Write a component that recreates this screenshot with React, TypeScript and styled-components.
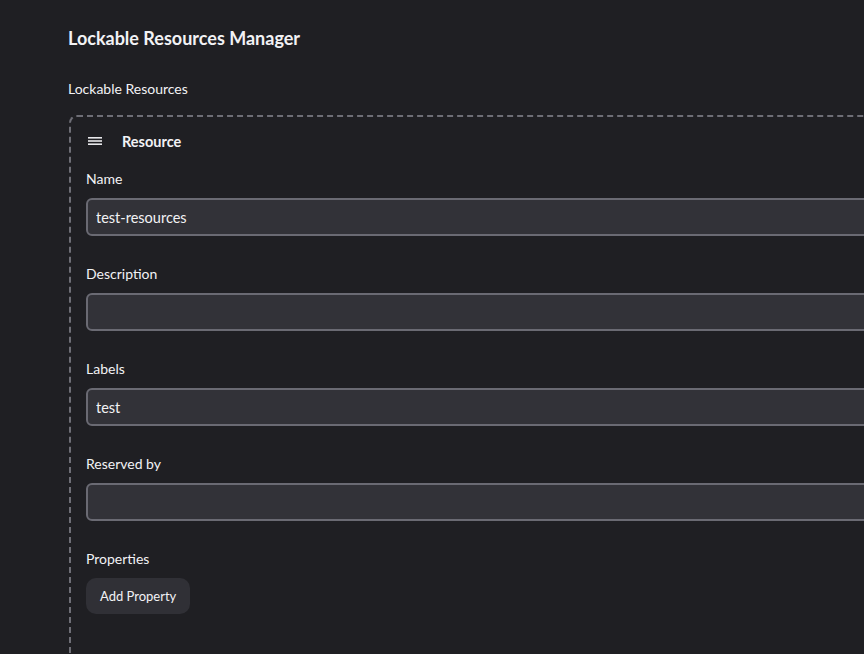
import React from "react";
import styled, { createGlobalStyle } from "styled-components";

const Global = createGlobalStyle`
  html, body { margin: 0; padding: 0; background: #1f1f23; overflow: hidden; }
  body { font-family: Lato, "Noto Sans", sans-serif; color: #f2f2f5; }
`;

const Page = styled.div`
  width: 1100px;
  padding: 26px 0 0 68px;
  box-sizing: border-box;
  height: 654px;
`;

const Title = styled.h1`
  margin: 0;
  font-size: 18px;
  font-weight: 700;
  line-height: 24px;
`;

const SectionLabel = styled.div`
  margin-top: 29px;
  font-size: 14px;
  line-height: 20px;
`;

const Repeatable = styled.div`
  margin-top: 16px;
  margin-left: 1px;
  border: 2px dashed #6e6e76;
  border-radius: 8px;
  padding: 14px 0 40px 15px;
  height: 700px;
  box-sizing: border-box;
`;

const Header = styled.div`
  display: flex;
  align-items: center;
  gap: 19px;
  height: 20px;
  margin-left: 1px;
`;

const HeaderTitle = styled.span`
  font-size: 14.5px;
  font-weight: 700;
`;

const Field = styled.div`
  display: flex;
  flex-direction: column;
  margin-top: 18px;
  & + & {
    margin-top: 28px;
  }
`;

const Label = styled.label`
  font-size: 14px;
  line-height: 20px;
  margin-bottom: 9px;
`;

const Input = styled.input`
  box-sizing: border-box;
  height: 38px;
  width: 900px;
  background: #323238;
  border: 2px solid #6a6a73;
  border-radius: 6px;
  color: #f2f2f5;
  font-family: inherit;
  font-size: 14.5px;
  padding: 0 8px;
  outline: none;
`;

const Button = styled.button`
  align-self: flex-start;
  height: 36px;
  padding: 0 14px;
  background: #303036;
  border: none;
  border-radius: 10px;
  color: #f2f2f5;
  font-family: inherit;
  font-size: 13px;
`;

const Menu = () => (
  <svg width="16" height="12" viewBox="0 0 16 12">
    <rect x="1" y="2" width="14" height="1.6" fill="#e8e8ec" />
    <rect x="1" y="5.2" width="14" height="1.6" fill="#e8e8ec" />
    <rect x="1" y="8.4" width="14" height="1.6" fill="#e8e8ec" />
  </svg>
);

const fields = [
  { label: "Name", value: "test-resources" },
  { label: "Description", value: "" },
  { label: "Labels", value: "test" },
  { label: "Reserved by", value: "" },
];

export default function App() {
  return (
    <>
      <Global />
      <Page>
        <Title>Lockable Resources Manager</Title>
        <SectionLabel>Lockable Resources</SectionLabel>
        <Repeatable>
          <Header>
            <Menu />
            <HeaderTitle>Resource</HeaderTitle>
          </Header>
          {fields.map((f) => (
            <Field key={f.label}>
              <Label>{f.label}</Label>
              <Input defaultValue={f.value} />
            </Field>
          ))}
          <Field>
            <Label>Properties</Label>
            <Button>Add Property</Button>
          </Field>
        </Repeatable>
      </Page>
    </>
  );
}
